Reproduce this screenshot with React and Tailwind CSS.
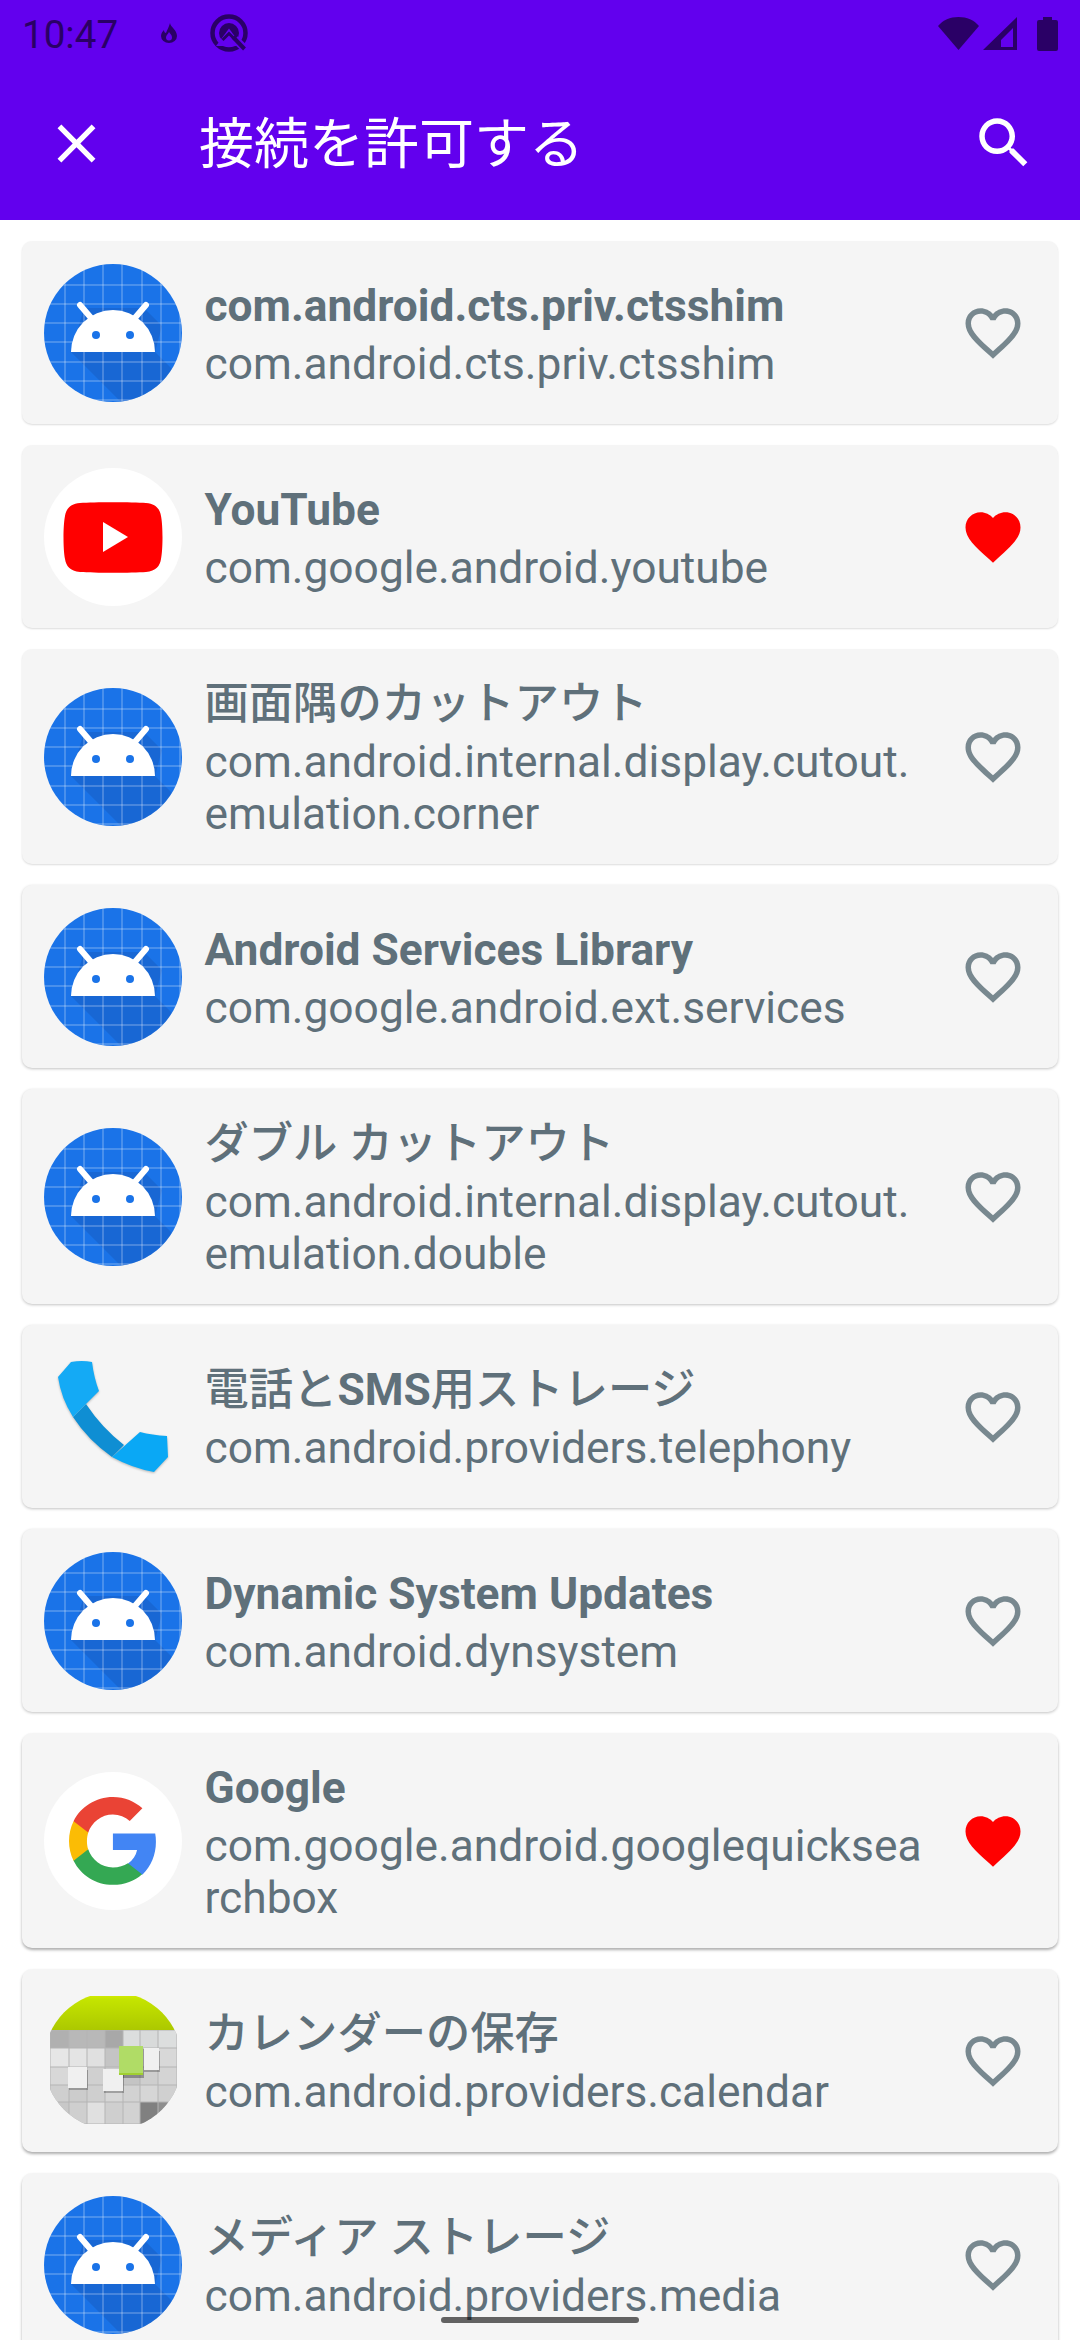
import React from "react";

const LIGHT = "shadow-[0_1px_2px_rgba(0,0,0,0.14)]";
const MID = "shadow-[0_1px_3px_rgba(0,0,0,0.24)]";
const HEAVY = "shadow-[0_2px_3px_rgba(0,0,0,0.32)]";

const rows = [
  { t: "com.android.cts.priv.ctsshim", s: "com.android.cts.priv.ctsshim", i: "android", sh: LIGHT },
  { t: "YouTube", s: "com.google.android.youtube", i: "youtube", fav: true, sh: LIGHT },
  { t: "画面隅のカットアウト", s: "com.android.internal.display.cutout.emulation.corner", i: "android", sh: LIGHT, cjk: true },
  { t: "Android Services Library", s: "com.google.android.ext.services", i: "android", sh: MID },
  { t: "ダブル カットアウト", s: "com.android.internal.display.cutout.emulation.double", i: "android", sh: MID, cjk: true },
  { t: <>電話と<span className="font-bold">SMS</span>用ストレージ</>, s: "com.android.providers.telephony", i: "phone", sh: MID, cjk: true },
  { t: "Dynamic System Updates", s: "com.android.dynsystem", i: "android", sh: MID },
  { t: "Google", s: "com.google.android.googlequicksearchbox", i: "google", fav: true, sh: HEAVY },
  { t: "カレンダーの保存", s: "com.android.providers.calendar", i: "calendar", sh: HEAVY, cjk: true },
  { t: "メディア ストレージ", s: "com.android.providers.media", i: "android", sh: HEAVY, cjk: true },
];

function AndroidIcon() {
  const g = [21, 40, 59, 78, 98, 117, 136];
  return (
    <svg viewBox="0 0 138 138" className="w-[138px] h-[138px] shrink-0">
      <defs>
        <clipPath id="c"><circle cx="69" cy="69" r="69" /></clipPath>
      </defs>
      <g clipPath="url(#c)">
        <rect width="138" height="138" fill="#1a73e8" />
        <path d="M27 88 L111 88 L138 115 L138 138 L77 138 Z M40 44 L100 44 L118 62 L111 88 L27 88 Z" fill="#1557b8" opacity="0.42" />
        {g.map((v) => (
          <g key={v} stroke="#ffffff" strokeOpacity="0.42" strokeWidth="1">
            <line x1={v} y1="0" x2={v} y2="138" />
            <line x1="0" y1={v} x2="138" y2={v} />
          </g>
        ))}
      </g>
      <path d="M27 88 A42 42 0 0 1 111 88 Z" fill="#fff" />
      <path d="M36 41 L48 55 M102 41 L90 55" stroke="#fff" strokeWidth="6" strokeLinecap="round" />
      <circle cx="52" cy="71" r="4" fill="#1a73e8" />
      <circle cx="86" cy="71" r="4" fill="#1a73e8" />
    </svg>
  );
}

function YouTubeIcon() {
  return (
    <svg viewBox="0 0 138 138" className="w-[138px] h-[138px] shrink-0">
      <circle cx="69" cy="69" r="69" fill="#fff" />
      <path d="M36 35 C50 34 88 34 102 35 C112 36 116 41 117 48 C119 58 119 81 117 91 C116 98 112 103 102 104 C88 105 50 105 36 104 C26 103 22 98 21 91 C19 81 19 58 21 48 C22 41 26 36 36 35 Z" fill="#ff0000" />
      <path d="M59 54 L84 69 L59 84 Z" fill="#fff" />
    </svg>
  );
}

function GoogleIcon() {
  return (
    <svg viewBox="0 0 138 138" className="w-[138px] h-[138px] shrink-0">
      <circle cx="69" cy="69" r="69" fill="#fff" />
      <g transform="translate(25 25) scale(1.83)">
        <path fill="#4285F4" d="M47.5 24.5c0-1.6-.1-3.1-.4-4.5H24v9h13.2c-.6 3-2.3 5.6-4.9 7.3v6h7.9c4.6-4.3 7.3-10.5 7.3-17.8z" />
        <path fill="#34A853" d="M24 48c6.5 0 11.9-2.1 15.9-5.8l-7.7-6c-2.2 1.4-5 2.3-8.2 2.3-6.3 0-11.6-4.2-13.5-9.9H2.5v6.2C6.4 42.6 14.6 48 24 48z" />
        <path fill="#FBBC05" d="M10.5 28.6c-.5-1.4-.7-3-.7-4.6s.3-3.2.7-4.6v-6.2h-8C.9 16.4 0 20.1 0 24s.9 7.6 2.5 10.8l8-6.2z" />
        <path fill="#EA4335" d="M24 9.5c3.5 0 6.7 1.2 9.2 3.6l6.9-6.9C35.9 2.4 30.5 0 24 0 14.6 0 6.4 5.4 2.5 13.2l8 6.2C12.4 13.7 17.7 9.5 24 9.5z" />
      </g>
    </svg>
  );
}

function PhoneIcon() {
  return (
    <svg viewBox="0 0 138 138" className="w-[138px] h-[138px] shrink-0 drop-shadow-[0_1px_1px_rgba(0,0,0,0.25)]">
      <path d="M29 69 L42 56 Q58 80 80 97 L68 109 Q44 92 29 69 Z" fill="#0f8ed3" />
      <path d="M27 14 Q38 12 48 14 Q50 30 55 43 L29 69 Q17 50 14 29 Z" fill="#14aaf5" />
      <path d="M68 109 L96 84 Q108 87 123 88 L124 109 L110 124 Q88 120 68 109 Z" fill="#0aa8f5" />
    </svg>
  );
}

function CalendarIcon() {
  const xs = [6, 25, 43, 61, 79, 96, 114];
  const ys = [38, 56, 75, 93, 110];
  const ws = [19, 18, 18, 18, 17, 18, 19];
  const hs = [18, 19, 18, 17, 22];
  const shades = [
    ["#b0b0b0", "#b8b8b8", "#b8b8b8", "#a8a8a8", "#dcdede", "#d8dada", "#dcdede"],
    ["#e6e6e6", "#e4e4e4", "#e0e0e0", "#c4c4c4", "#d8d8d8", "#d8d8d8", "#d8d8d8"],
    ["#d8d8d8", "#dadada", "#d0d0d0", "#cccccc", "#c4c4c4", "#cecece", "#d4d4d4"],
    ["#cfcfcf", "#cccccc", "#cfcfcf", "#d6d6d6", "#d2d2d2", "#d6d6d6", "#d0d0d0"],
    ["#c8c8c8", "#cfcfcf", "#e0e0e0", "#cfcfcf", "#d2d2d2", "#808080", "#8e8e8e"],
  ];
  return (
    <svg viewBox="0 0 138 138" className="w-[138px] h-[138px] shrink-0">
      <defs>
        <clipPath id="cal"><circle cx="69" cy="69" r="69" /></clipPath>
        <linearGradient id="lime" x1="0" x2="0" y1="0" y2="1">
          <stop offset="0" stopColor="#d0ea00" />
          <stop offset="0.1" stopColor="#c4e400" />
          <stop offset="1" stopColor="#acc800" />
        </linearGradient>
      </defs>
      <g clipPath="url(#cal)">
        <rect x="6" y="4" width="127" height="34" fill="url(#lime)" />
        <rect x="6" y="38" width="127" height="94" fill="#b4b4b4" />
        {shades.map((r, y) =>
          r.map((f, x) => (
            <rect key={x + "-" + y} x={xs[x] + 0.5} y={ys[y] + 0.5} width={ws[x] - 1} height={hs[y] - 1} fill={f} />
          ))
        )}
        <rect x="25" y="78" width="19" height="20" fill="#000" opacity="0.25" />
        <rect x="60" y="80" width="20" height="21" fill="#000" opacity="0.25" />
        <rect x="100" y="59" width="16" height="21" fill="#000" opacity="0.25" />
        <rect x="76" y="57" width="24" height="29" fill="#000" opacity="0.3" />
        <rect x="24" y="75" width="19" height="21" fill="#f0f0f0" />
        <rect x="59" y="77" width="20" height="22" fill="#f0f0f0" />
        <rect x="100" y="56" width="15" height="22" fill="#f0f0f0" />
        <rect x="75" y="54" width="24" height="29" fill="#b0dc66" />
        <rect x="75" y="81" width="24" height="2" fill="#a0d030" />
      </g>
    </svg>
  );
}

const icons = { android: AndroidIcon, youtube: YouTubeIcon, google: GoogleIcon, phone: PhoneIcon, calendar: CalendarIcon };

function Heart({ fav }) {
  return (
    <svg viewBox="0 0 24 24" className="w-[66px] h-[66px] shrink-0">
      {fav ? (
        <path fill="#ff0000" d="M12 21.35l-1.45-1.32C5.4 15.36 2 12.28 2 8.5 2 5.42 4.42 3 7.5 3c1.74 0 3.41.81 4.5 2.09C13.09 3.81 14.76 3 16.5 3 19.58 3 22 5.42 22 8.5c0 3.78-3.4 6.86-8.55 11.54L12 21.35z" />
      ) : (
        <path fill="#78888f" d="M16.5 3c-1.74 0-3.41.81-4.5 2.09C10.91 3.81 9.24 3 7.5 3 4.42 3 2 5.42 2 8.5c0 3.78 3.4 6.86 8.55 11.54L12 21.35l1.45-1.32C18.6 15.36 22 12.28 22 8.5 22 5.42 19.58 3 16.5 3zm-4.4 15.55l-.1.1-.1-.1C7.14 14.24 4 11.39 4 8.5 4 6.5 5.5 5 7.5 5c1.54 0 3.04.99 3.57 2.36h1.87C13.46 5.99 14.96 5 16.5 5c2 0 3.5 1.5 3.5 3.5 0 2.89-3.14 5.74-7.9 10.05z" />
      )}
    </svg>
  );
}

function Row({ t, s, i, fav, sh, cjk }) {
  const Icon = icons[i];
  return (
    <div className={"flex items-center bg-[#f5f5f5] rounded-[10px] mx-[22px] mb-[21px] pl-[22px] pr-[32px] py-[22.5px] " + sh}>
      <Icon />
      <div className="flex-1 min-w-0 ml-[22.5px] mr-[34px] pb-[2px] text-[#5f707a]">
        <div className={"text-[44.3px] leading-[64px] " + (cjk ? "font-medium" : "font-bold")}>{t}</div>
        <div className="text-[44.3px] leading-[52px] break-all">{s}</div>
      </div>
      <Heart fav={fav} />
    </div>
  );
}

export default function App() {
  return (
    <div className="relative w-[1080px] h-[2340px] overflow-hidden bg-white font-['Roboto','Noto_Sans_CJK_JP',sans-serif]">
      <div className="bg-[#6200ee] h-[220px]">
        <div className="h-[63px] flex items-center pl-[22px] pr-[22px] text-[#2a0066]">
          <span className="text-[38.6px] leading-[40px] mt-[6px] w-[138px]">10:47</span>
          <svg viewBox="0 0 18 20" className="w-[18px] h-[20px] mt-[2px]">
            <path d="M10 0 C10.5 4 17 7 17 13 A8 7 0 0 1 1 13 C1 10 3 8 4 7 C4 9 5 10 6 10 C7 7 9 4 10 0 Z" fill="#2a0066" />
            <path d="M9 9 C10 11 12 12 12 14.5 A3 3 0 0 1 6 14.5 C6 12.5 8 11 9 9 Z" fill="#6200ee" />
          </svg>
          <svg viewBox="0 0 38 38" className="w-[38px] h-[38px] ml-[32px] mt-[3px]">
            <circle cx="19" cy="19" r="16.5" fill="none" stroke="#2a0066" strokeWidth="4.5" />
            <circle cx="19" cy="19" r="10" fill="#2a0066" />
            <path d="M6 32 L19 14.5 L32 32 Z" fill="#6200ee" />
            <path d="M12.5 26 L19 19.5 L25.5 26" fill="none" stroke="#2a0066" strokeWidth="3" />
            <path d="M25 25 L36 36" stroke="#6200ee" strokeWidth="8" />
            <path d="M23 23 L34.5 35" stroke="#2a0066" strokeWidth="4" />
          </svg>
          <div className="flex-1" />
          <svg viewBox="0 0 41 33" className="w-[41px] h-[33px] mt-[3px]">
            <path d="M20.5 33 L0 9 C5 3 12 0 20.5 0 C29 0 36 3 41 9 Z" fill="#2a0066" />
          </svg>
          <svg viewBox="0 0 34 33" className="w-[34px] h-[33px] ml-[4px] mt-[3px]">
            <path d="M0 33 L34 0 V33 Z M18 30 H30 V11 L18 23 Z" fill="#2a0066" fillRule="evenodd" />
          </svg>
          <svg viewBox="0 0 21 34" className="w-[21px] h-[34px] ml-[20px] mt-[4px]">
            <path d="M6 0 H15 V3 H19 A2 2 0 0 1 21 5 V32 A2 2 0 0 1 19 34 H2 A2 2 0 0 1 0 32 V5 A2 2 0 0 1 2 3 H6 Z" fill="#2a0066" />
          </svg>
        </div>
        <div className="h-[157px] flex items-center text-white">
          <svg viewBox="0 0 24 24" className="w-[65px] h-[65px] ml-[44px] mt-[3px]" fill="#fff">
            <path d="M19 6.41L17.59 5 12 10.59 6.41 5 5 6.41 10.59 12 5 17.59 6.41 19 12 13.41 17.59 19 19 17.59 13.41 12z" />
          </svg>
          <span className="text-[55px] leading-[66px] mt-[4px] ml-[90px] flex-1">接続を許可する</span>
          <svg viewBox="0 0 24 24" className="w-[66px] h-[66px] mr-[43px] mt-[3px]" fill="#fff">
            <path d="M15.5 14h-.79l-.28-.27C15.41 12.59 16 11.11 16 9.5 16 5.91 13.09 3 9.5 3S3 5.91 3 9.5 5.91 16 9.5 16c1.61 0 3.09-.59 4.23-1.57l.27.28v.79l5 4.99L20.49 19l-4.99-5zm-6 0C7.01 14 5 11.99 5 9.5S7.01 5 9.5 5 14 7.01 14 9.5 11.99 14 9.5 14z" />
          </svg>
        </div>
      </div>
      <div className="pt-[21px]">
        {rows.map((r) => (
          <Row key={r.s} {...r} />
        ))}
      </div>
      <div className="absolute left-[441px] top-[2317px] w-[198px] h-[6px] rounded-full bg-[#000000]/60" />
    </div>
  );
}
